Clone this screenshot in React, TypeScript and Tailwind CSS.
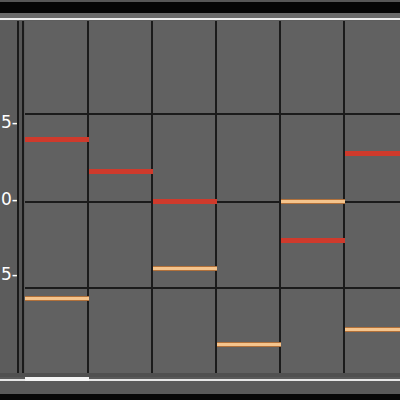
type Note = { id: string; kind: 'hi' | 'lo'; pos: string };

// Note bars in plot coordinates (plot origin is the top-left of the first cell).
const notes: Note[] = [
  { id: 'h1', kind: 'hi', pos: 'left-0 top-[116px] w-[64px]' },
  { id: 'h2', kind: 'hi', pos: 'left-[64px] top-[148px] w-[64px]' },
  { id: 'h3', kind: 'hi', pos: 'left-[128px] top-[178px] w-[64px]' },
  { id: 'h4', kind: 'hi', pos: 'left-[256px] top-[217px] w-[64px]' },
  { id: 'h5', kind: 'hi', pos: 'left-[320px] top-[130px] w-[60px]' },
  { id: 'l1', kind: 'lo', pos: 'left-0 top-[275px] w-[64px]' },
  { id: 'l2', kind: 'lo', pos: 'left-[128px] top-[245px] w-[64px]' },
  { id: 'l3', kind: 'lo', pos: 'left-[192px] top-[321px] w-[64px]' },
  { id: 'l4', kind: 'lo', pos: 'left-[256px] top-[178px] w-[64px]' },
  { id: 'l5', kind: 'lo', pos: 'left-[320px] top-[306px] w-[60px]' },
];

const rows = ['h-[94px]', 'h-[88px]', 'h-[86px]', 'h-[84px]'];
const cols = ['w-[64px]', 'w-[64px]', 'w-[64px]', 'w-[64px]', 'w-[64px]', 'w-[56px]'];

function AxisLabels() {
  return (
    <div className="relative w-[17px] shrink-0 bg-[#5c5c5c] overflow-hidden text-white text-[17px] leading-none font-['DejaVu_Sans',sans-serif]">
      <span className="absolute -right-[1px] top-[93px]">5-</span>
      <span className="absolute -right-[1px] top-[170px]">0-</span>
      <span className="absolute -right-[1px] top-[245px]">5-</span>
    </div>
  );
}

function Plot() {
  return (
    <div className="relative flex-1 bg-[#616161] overflow-hidden">
      <div className="flex flex-col">
        {rows.map((h, r) => (
          <div key={r} className={`flex ${h} ${r < rows.length - 1 ? 'border-b-2 border-[#1b1b1b]' : ''}`}>
            {cols.map((w, c) => (
              <div key={c} className={`${w} shrink-0 ${c < cols.length - 1 ? 'border-r-2 border-[#1b1b1b]' : ''}`} />
            ))}
          </div>
        ))}
      </div>
      {notes.map((n) =>
        n.kind === 'hi' ? (
          <div key={n.id} className={`absolute h-[5px] bg-[#cf3a2c] ${n.pos}`} />
        ) : (
          <div key={n.id} className={`absolute h-[5px] border-y border-[#b0703a] bg-[#f5c48c] ${n.pos}`} />
        ),
      )}
    </div>
  );
}

export default function App() {
  return (
    <div className="w-[400px] h-[400px] overflow-hidden bg-[#5a5a5a] flex flex-col">
      <div className="h-[2px] bg-[#565656]" />
      <div className="h-[11px] bg-[#050505]" />
      <div className="h-[5px] bg-[#6a6a6a]" />
      <div className="h-[2px] bg-[#ececec]" />
      <div className="h-[1px] bg-[#5e5e5e]" />

      <div className="flex h-[352px]">
        <AxisLabels />
        <div className="w-[2px] bg-[#1a1a1a]" />
        <div className="w-[3px] bg-[#565656]" />
        <div className="w-[2px] bg-[#1a1a1a]" />
        <div className="w-[1px] bg-[#5a5a5a]" />
        <Plot />
      </div>

      <div className="h-[4px] bg-[#505050]" />
      <div className="flex h-[4px] items-end">
        <div className="w-[25px] h-[2px] bg-[#e6e6e6]" />
        <div className="w-[64px] h-[4px] bg-[#f4f4f4]" />
        <div className="flex-1 h-[2px] bg-[#e6e6e6]" />
      </div>
      <div className="h-[13px] bg-[#5a5a5a]" />
      <div className="flex-1 bg-[#080808]" />
    </div>
  );
}
